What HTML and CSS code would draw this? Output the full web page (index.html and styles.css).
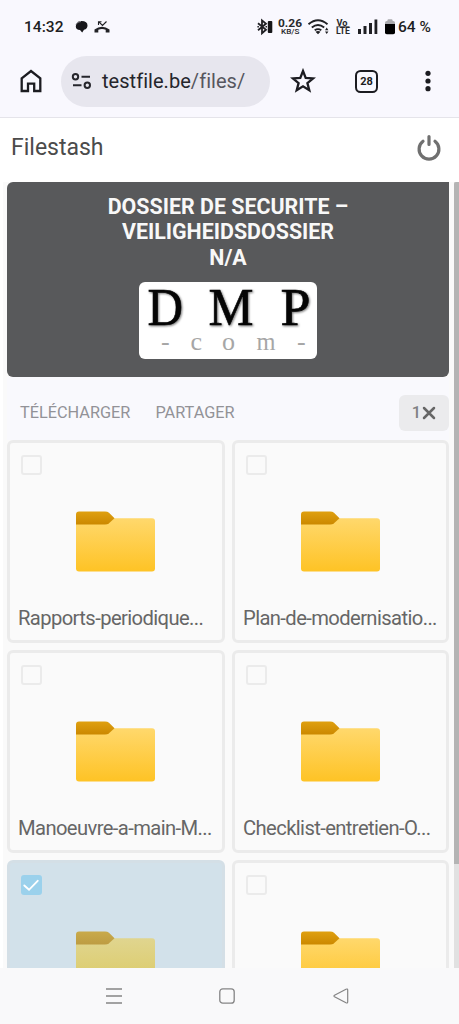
FILE: index.html
```
<!DOCTYPE html>
<html lang="fr">
<head>
<meta charset="utf-8">
<title>Filestash</title>
<link rel="stylesheet" href="styles.css">
</head>
<body>
<svg class="defs" width="0" height="0" aria-hidden="true">
  <defs>
    <linearGradient id="tab" x1="0" y1="0" x2="0" y2="1"><stop offset="0" stop-color="#dfa010"/><stop offset="1" stop-color="#cb8800"/></linearGradient>
    <linearGradient id="body" x1="0" y1="0" x2="0" y2="1"><stop offset="0" stop-color="#ffd86c"/><stop offset="1" stop-color="#fec325"/></linearGradient>
    <linearGradient id="tab-on" x1="0" y1="0" x2="0" y2="1"><stop offset="0" stop-color="#c9aa4a"/><stop offset="1" stop-color="#bd9c42"/></linearGradient>
    <linearGradient id="body-on" x1="0" y1="0" x2="0" y2="1"><stop offset="0" stop-color="#e0d58f"/><stop offset="1" stop-color="#dbc95f"/></linearGradient>
    <symbol id="folder" viewBox="0 0 79 60">
      <path fill="url(#body)" d="M0 8h34l4-1.200h38q3 0 3 3v47.200q0 3-3 3H3q-3 0-3-3z"/>
      <path fill="url(#tab)" d="M3 0h26q2.500 0 4 1.200l5.500 5.600-5.500 5q-1.500 1.200-4 1.200H0V3q0-3 3-3z"/>
    </symbol>
    <symbol id="folder-on" viewBox="0 0 79 60">
      <path fill="url(#body-on)" d="M0 8h34l4-1.200h38q3 0 3 3v47.200q0 3-3 3H3q-3 0-3-3z"/>
      <path fill="url(#tab-on)" d="M3 0h26q2.500 0 4 1.200l5.500 5.600-5.500 5q-1.500 1.200-4 1.200H0V3q0-3 3-3z"/>
    </symbol>
  </defs>
</svg>
<div class="phone">
  <div class="status">
    <span class="clock">14:32</span>
    <svg class="notices" width="36" height="14" viewBox="0 0 36 14">
      <path fill="#17171b" d="M2 3.200Q3 1 6.500 1q6 0 6 4.500 0 3.300-3.500 4.300L7.200 12.500 5 10Q.8 9.600.8 6.500.8 4.300 2 3.200z"/>
      <path d="M1 4.500q1-3 5-3" fill="none" stroke="#8b8b91" stroke-width="1"/>
      <path fill="#222226" d="M19.500 12.500v-3q7.500-5.500 15 0v3h-3.800V9.800q-3.700-1.400-7.400 0v2.700z"/>
      <path d="M23.500 5V1.800h3M24 2l3.500 3.500L31.500 1.500" fill="none" stroke="#222226" stroke-width="1.100"/>
    </svg>
    <svg class="signals" width="140" height="20" viewBox="0 0 140 20">
      <path d="M1 6.200l8 6.600-4 3.500V3.400l4 3.300-8 6.600" fill="none" stroke="#202024" stroke-width="1.800"/>
      <path d="M.4 9.700h1.500M8.500 9.700H10" stroke="#202024" stroke-width="1.500"/>
      <rect x="10.800" y="4" width="4.500" height="12" rx="1" fill="#161619"/>
      <g fill="#28282c" font-family="Roboto" font-weight="500">
        <text x="21" y="10.200" font-size="10.800" font-weight="700" textLength="24" lengthAdjust="spacingAndGlyphs">0.26</text>
        <text x="24" y="17" font-size="7.500" textLength="18.500" lengthAdjust="spacingAndGlyphs">KB/S</text>
        <text x="79.500" y="8.600" font-size="8.500" font-weight="700" textLength="11" lengthAdjust="spacingAndGlyphs">Vo</text>
        <text x="79" y="17.200" font-size="9" font-weight="700" textLength="14" lengthAdjust="spacingAndGlyphs">LTE</text>
      </g>
      <g fill="none" stroke="#202024" stroke-width="1.900"><path d="M51.500 7.300q9.500-8 19 0M54.800 10.500q6.200-5 12.400 0M57.700 13.300q3.300-2.400 6.600 0"/></g>
      <path fill="#202024" d="M58.500 14.800q2.500-1.500 5 0L61 17.200zM68 13.300l1.700-2.800 1.700 2.800zM68 14.400h3.400l-1.700 2.600zM101 12h3v5h-3zM106.500 9h3v8h-3zM112 6h3v11h-3zM117.500 2.500h2.800V17h-2.800z"/>
      <path d="M79.500 9.700h13" stroke="#28282c" stroke-width=".8"/>
      <rect x="128" y="4" width="10" height="13" rx="1.800" fill="#aaaaae"/><rect x="130.500" y="2.300" width="5" height="3" rx="1" fill="#aaaaae"/>
      <path d="M128 7h10v8.500q0 1.800-1.800 1.800h-6.400q-1.800 0-1.800-1.800z"/>
    </svg>
    <span class="battery">64 %</span>
  </div>
  <div class="chrome">
    <svg class="home" width="22" height="24" viewBox="0 0 22 24" fill="none" stroke="#1c1c21" stroke-width="2.300"><path d="M1.700 9.400 11 2l9.300 7.400V22h-6.100v-7.400H8V22H1.700z"/></svg>
    <div class="address">
      <svg width="20" height="18" viewBox="0 0 20 18" fill="none" stroke="#26262c" stroke-width="2"><circle cx="4.500" cy="4.800" r="2.700"/><path d="M10.500 4.800H19M2 13.200h8.500"/><circle cx="16.300" cy="13.200" r="2.700"/></svg>
      <span class="url">testfile.be<span class="path">/files/</span></span>
    </div>
    <svg class="star" width="26" height="26" viewBox="0 0 26 26" fill="none" stroke="#1c1c21" stroke-width="2.300"><path d="M13 3l2.700 6.900 7.400.5-5.700 4.700 1.900 7.200L13 18.300l-6.300 4 1.900-7.200-5.700-4.700 7.400-.5z"/></svg>
    <span class="tabs">28</span>
    <svg class="more" width="8" height="22" viewBox="0 0 8 22" fill="#1c1c21"><circle cx="4" cy="3.300" r="2.600"/><circle cx="4" cy="11" r="2.600"/><circle cx="4" cy="18.700" r="2.600"/></svg>
  </div>
  <header class="app-header">
    <span class="brand">Filestash</span>
    <svg width="24" height="27" viewBox="0 0 24 27" fill="none" stroke="#707070" stroke-width="3.200" stroke-linecap="round"><path d="M6 7.300a9.900 9.900 0 1 0 12 0M12 2.500v8"/></svg>
  </header>
  <main class="scroller">
    <div class="content">
      <section class="banner">
        <h1><span>DOSSIER DE SECURITE –</span><span>VEILIGHEIDSDOSSIER</span><span>N/A</span></h1>
        <div class="logo">
          <svg width="178" height="77" viewBox="0 0 178 77" font-family="Liberation Serif">
            <g class="dmp" font-size="52"><text x="8.500" y="43" textLength="35.500" lengthAdjust="spacingAndGlyphs">D</text><text x="69.500" y="43" textLength="45" lengthAdjust="spacingAndGlyphs">M</text><text x="141.500" y="43" textLength="30" lengthAdjust="spacingAndGlyphs">P</text></g>
            <g fill="#a6a6a6" font-size="26"><text x="22" y="67.500">-</text><text x="51.500" y="67.500">c</text><text x="83" y="67.500">o</text><text x="117.500" y="67.500" textLength="19" lengthAdjust="spacingAndGlyphs">m</text><text x="158" y="67.500">-</text></g>
          </svg>
        </div>
      </section>
      <div class="actions">
        <span class="download">TÉLÉCHARGER</span><span class="share">PARTAGER</span>
        <span class="count">1<svg width="14" height="14" viewBox="0 0 14 14"><path d="M2 2l10 10M12 2L2 12" stroke="#666" stroke-width="2.500" stroke-linecap="round"/></svg></span>
      </div>
      <div class="grid">
        <article class="card"><i class="check"></i><svg class="folder"><use href="#folder"/></svg><span class="name">Rapports-periodique...</span></article>
        <article class="card"><i class="check"></i><svg class="folder"><use href="#folder"/></svg><span class="name">Plan-de-modernisatio...</span></article>
        <article class="card"><i class="check"></i><svg class="folder"><use href="#folder"/></svg><span class="name">Manoeuvre-a-main-M...</span></article>
        <article class="card"><i class="check"></i><svg class="folder"><use href="#folder"/></svg><span class="name">Checklist-entretien-O...</span></article>
        <article class="card selected"><i class="check"><svg width="20" height="20" viewBox="0 0 20 20"><path d="M3.300 10.500l4.700 4.300 8.700-9" fill="none" stroke="#fff" stroke-width="1.900" stroke-linecap="round"/></svg></i><svg class="folder"><use href="#folder-on"/></svg></article>
        <article class="card"><i class="check"></i><svg class="folder"><use href="#folder"/></svg></article>
      </div>
    </div>
    <div class="track"><div class="thumb"></div></div>
  </main>
  <nav class="navbar">
    <svg width="16" height="18" viewBox="0 0 16 18" stroke="#858585" stroke-width="1.400"><path d="M0 2h16M0 9h16M0 16h16"/></svg>
    <svg width="16" height="18" viewBox="0 0 16 18" fill="none" stroke="#858585" stroke-width="1.300"><rect x=".8" y="1.800" width="14.400" height="14.400" rx="3"/></svg>
    <svg width="16" height="18" viewBox="0 0 16 18" fill="none" stroke="#858585" stroke-width="1.200" stroke-linejoin="round"><path d="M1.500 8.200 13 2.200q1.700-.7 1.700 1v11.600q0 1.700-1.700 1L1.500 9.800q-1-.8 0-1.600z"/></svg>
  </nav>
</div>
</body>
</html>
```

FILE: styles.css
```
* { box-sizing: border-box; }
body { margin: 0; font-family: Roboto, sans-serif; background: #fff; }
.defs { position: absolute; }
.phone { width: 459px; height: 1024px; display: flex; flex-direction: column; overflow: hidden; }

.status { height: 53px; flex: none; background: #f9f8fe; display: flex; align-items: center; padding-left: 24px; color: #1e1e22; }
.clock { width: 51px; font-size: 15.5px; font-weight: 500; letter-spacing: .05px; }
.signals { margin-left: 146px; }
.battery { margin-left: 1px; font-size: 15.5px; font-weight: 500; white-space: nowrap; }

.chrome { height: 65px; flex: none; background: #f9f8fe; display: flex; align-items: center; padding: 0 27px 8px 20px; border-bottom: 1px solid #e5e4ea; }
.address { width: 209px; height: 51px; margin-left: 19px; border-radius: 26px; background: #e7e6ee; display: flex; align-items: center; padding-left: 10px; }
.url { margin-left: 11px; font-size: 20px; color: #25252b; white-space: nowrap; letter-spacing: .04px; }
.path { color: #56565e; }
.star { margin-left: 20px; }
.tabs { width: 23px; height: 23px; margin-left: 39px; border: 2px solid #1c1c21; border-radius: 5.5px; font-size: 11px; font-weight: 700; line-height: 19px; text-align: center; color: #1c1c21; }
.more { margin-left: auto; }

.app-header { height: 64px; flex: none; display: flex; align-items: center; justify-content: space-between; padding: 0 18px 5px 11px; color: #4b4b4b; }
.brand { font-size: 23px; }

.scroller { height: 786px; flex: none; display: flex; overflow: hidden; padding-left: 3px; background: linear-gradient(90deg, #fff 3px, #fafafa 3px); }
.content { width: 451px; padding: 0 5px 0 4px; }
.banner { height: 195px; border-radius: 6px 0 6px 6px; background: #58595b; display: flex; flex-direction: column; align-items: center; padding-top: 12px; }
h1 { margin: 0; font-size: 21.4px; line-height: 25.3px; font-weight: 700; color: #f8f8f8; text-align: center; display: flex; flex-direction: column; align-items: center; white-space: nowrap; }
.logo { width: 178px; height: 77px; margin-top: 12px; background: #fff; border-radius: 6px; }
.logo svg { display: block; }
.dmp { fill: #050505; stroke: #050505; stroke-width: .6px; filter: drop-shadow(1px 1.5px 1.2px #777); }
.actions { height: 63px; display: flex; align-items: center; padding: 8px 0 0 13px; background: #f9f9fd; color: #929297; font-size: 16.3px; white-space: nowrap; }
.share { margin-left: 25px; }
.count { width: 50px; height: 36px; margin-left: auto; border-radius: 6px; background: #ebebed; display: flex; align-items: center; justify-content: center; gap: 1px; color: #808083; font-weight: 500; }
.grid { display: grid; grid-template-columns: 218px 217px; grid-auto-rows: 203px; gap: 7px; }
.card { border: 3px solid #ebebeb; border-radius: 6px; background: #fafafa; padding: 12px 0 0 11px; display: flex; flex-direction: column; align-items: flex-start; overflow: hidden; }
.check { width: 21px; height: 20px; border: 2px solid #ebebeb; border-radius: 3px; flex: none; }
.folder { width: 79px; height: 61px; margin: 36px 0 0 55px; flex: none; }
.name { margin: 34px 0 0 -3px; font-size: 20.2px; line-height: 24px; color: #666; white-space: nowrap; letter-spacing: -.6px; }
.selected { background: #d2e1ea; border-color: #d4dfe6; }
.selected .check { border: 0; background: #9bd1ec; }
.selected .check svg { display: block; }
.track { width: 5px; background: #e1e1e1; }
.thumb { height: 682px; background: #b4b4b4; border-radius: 2px 0 0 0; }

.navbar { height: 56px; flex: none; background: #f9f9fa; display: flex; align-items: center; gap: 97.5px; padding-left: 105.5px; }
```
